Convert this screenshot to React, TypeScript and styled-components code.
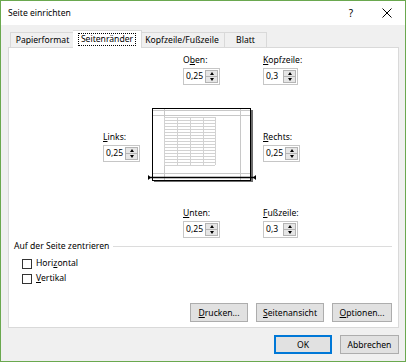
import React from 'react';
import styled, {createGlobalStyle} from 'styled-components';

/* -------------------------------------------------------------------------- */
/*                                   Styles                                   */
/* -------------------------------------------------------------------------- */
const GlobalStyle = createGlobalStyle`
  html,
  body {
    margin: 0;
    padding: 0;
    background: #ffffff;
  }

  body {
    font-family: 'Noto Sans', 'Segoe UI', sans-serif;
    font-size: 8.6px;
    color: #000000;
  }
`;

const Window = styled.div`
  width: 406px;
  height: 362px;
  box-sizing: border-box;
  border: 1px solid #6aa84f;
  background: #f0f0f0;
  display: flex;
  flex-direction: column;
`;

const TitleBar = styled.div`
  height: 24px;
  flex: 0 0 24px;
  display: flex;
  align-items: center;
  padding-left: 7px;
  background: #ffffff;
`;

const Title = styled.span`
  flex-grow: 1;
`;

const HelpButton = styled.span`
  width: 36px;
  font-size: 10px;
  text-align: center;
`;

const CloseButton = styled.span`
  width: 36px;
  display: flex;
  align-items: center;
  justify-content: center;
`;

const Body = styled.div`
  flex-grow: 1;
  display: flex;
  flex-direction: column;
  padding: 0 6px 0 7px;
`;

const TabStrip = styled.div`
  display: flex;
  align-items: flex-end;
  height: 23px;
  padding-left: 2px;
  margin-bottom: -1px;
  position: relative;
  z-index: 1;
`;

const Tab = styled.div<{$width: number; $active?: boolean}>`
  box-sizing: border-box;
  width: ${({$width, $active}) => $width + ($active ? 4 : 0)}px;
  height: ${({$active}) => ($active ? 18 : 16)}px;
  margin: ${({$active}) => ($active ? '0 -2px' : '0')};
  display: flex;
  align-items: center;
  justify-content: center;
  border: 1px solid #d9d9d9;
  border-bottom: ${({$active}) => ($active ? 'none' : '1px solid #d9d9d9')};
  background: ${({$active}) => ($active ? '#ffffff' : '#f0f0f0')};
  position: relative;
  z-index: ${({$active}) => ($active ? 2 : 1)};

  & + & {
    border-left: ${({$active}) => ($active ? '1px solid #d9d9d9' : 'none')};
  }
`;

const FocusLabel = styled.span`
  padding: 0 2px;
  line-height: 11px;
  outline: 1px dotted #000000;
`;

const Panel = styled.div`
  box-sizing: border-box;
  height: 281px;
  display: flex;
  flex-direction: column;
  border: 1px solid #d9d9d9;
  background: #ffffff;
`;

const MarginGrid = styled.div`
  display: grid;
  grid-template-columns: 37px 107px auto;
  grid-template-rows: auto auto auto;
  column-gap: 8px;
  row-gap: 21px;
  padding: 6px 0 0 94px;
`;

const Field = styled.div<{$col: number; $offset?: number}>`
  grid-column: ${({$col}) => $col};
  align-self: center;
  margin-left: ${({$offset}) => $offset ?? 0}px;
  display: flex;
  flex-direction: column;
  align-items: flex-start;
`;

const Label = styled.span`
  line-height: 13px;
  margin-bottom: 1px;
`;

const Key = styled.span`
  text-decoration: underline;
  text-underline-offset: 1px;
`;

const Spin = styled.div<{$width: number}>`
  box-sizing: border-box;
  width: ${({$width}) => $width}px;
  height: 17px;
  display: flex;
  border: 1px solid #c6c6c6;
  background: #ffffff;
`;

const SpinValue = styled.span`
  flex-grow: 1;
  padding-left: 2px;
  line-height: 15px;
`;

const SpinButtons = styled.div`
  width: 11px;
  margin: 1px;
  display: flex;
  flex-direction: column;
  border: 1px solid #b4b4b4;
  background: #e6e6e6;
`;

const SpinHalf = styled.div<{$down?: boolean}>`
  flex: 1;
  display: flex;
  align-items: center;
  justify-content: center;
  border-top: ${({$down}) => ($down ? '1px solid #b4b4b4' : 'none')};

  &::after {
    content: '';
    width: 0;
    height: 0;
    border-left: 2.5px solid transparent;
    border-right: 2.5px solid transparent;
    ${({$down}) => ($down ? 'border-top: 3px solid #000000;' : 'border-bottom: 3px solid #000000;')}
  }
`;

const Preview = styled.svg`
  grid-column: 2;
  display: block;
`;

const CenterSection = styled.div`
  margin-top: 2px;
  padding-left: 5px;
  display: flex;
  flex-direction: column;
  row-gap: 2px;
`;

const GroupHeading = styled.div`
  display: flex;
  align-items: center;
  column-gap: 4px;
  line-height: 13px;
  margin-bottom: 2px;

  &::after {
    content: '';
    flex-grow: 1;
    height: 1px;
    margin-right: 6px;
    background: #dcdcdc;
  }
`;

const CheckRow = styled.label`
  display: flex;
  align-items: center;
  column-gap: 4px;
  padding-left: 8px;
  line-height: 13px;
`;

const CheckBox = styled.span`
  box-sizing: border-box;
  width: 10px;
  height: 10px;
  border: 1px solid #333333;
  background: #ffffff;
`;

const ButtonRow = styled.div`
  margin-top: auto;
  display: flex;
  justify-content: flex-end;
  column-gap: 8px;
  padding: 0 6px 5px 0;
`;

const Button = styled.div<{$width: number; $default?: boolean}>`
  box-sizing: border-box;
  width: ${({$width}) => $width}px;
  height: 19px;
  display: flex;
  align-items: center;
  justify-content: center;
  border: 1px solid ${({$default}) => ($default ? '#0078d7' : '#adadad')};
  box-shadow: ${({$default}) => ($default ? 'inset 0 0 0 1px #0078d7' : 'none')};
  background: #e1e1e1;
`;

const Footer = styled.div`
  display: flex;
  justify-content: flex-end;
  column-gap: 8px;
  padding: 7px 0 0 0;
`;

/* -------------------------------------------------------------------------- */
/*                                  Preview                                   */
/* -------------------------------------------------------------------------- */
const PagePreview: React.FC = () => {
  const rows = Array.from({length: 17}, (_, i) => 11 + i * 3);
  const cols = [16, 29, 42, 55, 67];
  return (
    <Preview width={108} height={80} viewBox="0 0 108 80">
      <rect x={6} y={4} width={99} height={72} fill="#6d6d6d" />
      <rect x={4.5} y={2.5} width={98} height={72} fill="#ffffff" stroke="#000000" />
      <g stroke="#c8c8c8" strokeWidth={1}>
        <line x1={5} y1={4.5} x2={102} y2={4.5} />
        <line x1={5} y1={9.5} x2={102} y2={9.5} />
        <line x1={5} y1={67.5} x2={102} y2={67.5} />
        <line x1={16.5} y1={3} x2={16.5} y2={74} />
        <line x1={92.5} y1={3} x2={92.5} y2={74} />
      </g>
      <g stroke="#d2d2d2" strokeWidth={1}>
        {rows.map(y => (
          <line key={y} x1={16} y1={y + 0.5} x2={67} y2={y + 0.5} />
        ))}
        {cols.map(x => (
          <line key={x} x1={x + 0.5} y1={11} x2={x + 0.5} y2={59} />
        ))}
      </g>
      <line x1={1} y1={71.5} x2={107} y2={71.5} stroke="#000000" strokeWidth={1.4} />
      <polygon points="0,69 3,71.5 0,74" fill="#000000" />
      <polygon points="108,69 105,71.5 108,74" fill="#000000" />
    </Preview>
  );
};

/* -------------------------------------------------------------------------- */
/*                                 Spin field                                 */
/* -------------------------------------------------------------------------- */
interface SpinFieldProps {
  label: React.ReactNode;
  value: string;
  col: number;
  width?: number;
  offset?: number;
}

const SpinField: React.FC<SpinFieldProps> = ({label, value, col, width = 37, offset}) => (
  <Field $col={col} $offset={offset}>
    <Label>{label}</Label>
    <Spin $width={width}>
      <SpinValue>{value}</SpinValue>
      <SpinButtons>
        <SpinHalf />
        <SpinHalf $down />
      </SpinButtons>
    </Spin>
  </Field>
);

/* -------------------------------------------------------------------------- */
/*                                    App                                     */
/* -------------------------------------------------------------------------- */
const App: React.FC = () => (
  <>
    <GlobalStyle />
    <Window>
      <TitleBar>
        <Title>Seite einrichten</Title>
        <HelpButton>?</HelpButton>
        <CloseButton>
          <svg width={10} height={10} viewBox="0 0 10 10">
            <path d="M0.5 0.5 L9.5 9.5 M9.5 0.5 L0.5 9.5" stroke="#000000" strokeWidth={1} />
          </svg>
        </CloseButton>
      </TitleBar>
      <Body>
        <TabStrip>
          <Tab $width={65}>Papierformat</Tab>
          <Tab $width={65} $active>
            <FocusLabel>Seitenränder</FocusLabel>
          </Tab>
          <Tab $width={85}>Kopfzeile/Fußzeile</Tab>
          <Tab $width={42}>Blatt</Tab>
        </TabStrip>
        <Panel>
          <MarginGrid>
            <SpinField
              col={2}
              offset={35}
              value="0,25"
              label={
                <>
                  O<Key>b</Key>en:
                </>
              }
            />
            <SpinField
              col={3}
              width={35}
              value="0,3"
              label={
                <>
                  <Key>K</Key>opfzeile:
                </>
              }
            />
            <SpinField
              col={1}
              value="0,25"
              label={
                <>
                  <Key>L</Key>inks:
                </>
              }
            />
            <PagePreview />
            <SpinField
              col={3}
              value="0,25"
              label={
                <>
                  <Key>R</Key>echts:
                </>
              }
            />
            <SpinField
              col={2}
              offset={35}
              value="0,25"
              label={
                <>
                  <Key>U</Key>nten:
                </>
              }
            />
            <SpinField
              col={3}
              width={35}
              value="0,3"
              label={
                <>
                  <Key>F</Key>ußzeile:
                </>
              }
            />
          </MarginGrid>
          <CenterSection>
            <GroupHeading>Auf der Seite zentrieren</GroupHeading>
            <CheckRow>
              <CheckBox />
              <span>
                Hori<Key>z</Key>ontal
              </span>
            </CheckRow>
            <CheckRow>
              <CheckBox />
              <span>
                <Key>V</Key>ertikal
              </span>
            </CheckRow>
          </CenterSection>
          <ButtonRow>
            <Button $width={58}>
              <span>
                <Key>D</Key>rucken...
              </span>
            </Button>
            <Button $width={68}>
              <span>
                <Key>S</Key>eitenansicht
              </span>
            </Button>
            <Button $width={60}>
              <span>
                <Key>O</Key>ptionen...
              </span>
            </Button>
          </ButtonRow>
        </Panel>
        <Footer>
          <Button $width={58} $default>
            OK
          </Button>
          <Button $width={59}>Abbrechen</Button>
        </Footer>
      </Body>
    </Window>
  </>
);

export default App;
